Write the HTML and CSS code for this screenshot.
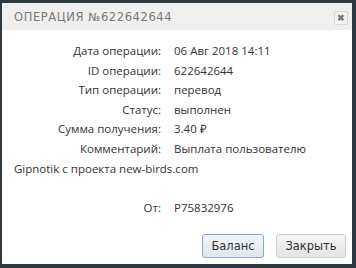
FILE: index.html
```html
<!DOCTYPE html>
<html lang="ru">

<head>
    <meta charset="UTF-8">
    <meta name="viewport" content="width=device-width, initial-scale=1.0">
    <title>Операция</title>
    <link rel="stylesheet" href="styles.css">
</head>

<body>
    <div class="dialog">
        <div class="dialog-header">
            <span class="dialog-title">Операция №622642644</span>
            <button class="close-btn" type="button">&#10006;</button>
        </div>
        <div class="dialog-body">
            <div class="info">
                <span class="label">Дата операции:</span>
                <span class="value">06 Авг 2018 14:11</span>
                <span class="label">ID операции:</span>
                <span class="value">622642644</span>
                <span class="label">Тип операции:</span>
                <span class="value">перевод</span>
                <span class="label">Статус:</span>
                <span class="value">выполнен</span>
                <span class="label">Сумма получения:</span>
                <span class="value">3.40 &#8381;</span>
                <span class="label">Комментарий:</span>
                <span class="value">Выплата пользователю</span>
                <span class="full">Gipnotik с проекта new-birds.com</span>
                <span class="full"></span>
                <span class="label">От:</span>
                <span class="value">P75832976</span>
            </div>
        </div>
        <div class="dialog-footer">
            <button class="btn btn-primary" type="button">Баланс</button>
            <button class="btn btn-close" type="button">Закрыть</button>
        </div>
    </div>
</body>

</html>
```

FILE: styles.css
```css
body {
    margin: 0;
    padding: 3px 4px 4px 2px;
    background-color: #2e3a40;
    font-family: "Open Sans", Arial, sans-serif;
}

.dialog {
    width: 350px;
    height: 261px;
    background: #fff;
    display: flex;
    flex-direction: column;
}

.dialog-header {
    height: 27px;
    flex-shrink: 0;
    background: #efefef;
    display: flex;
    align-items: center;
    justify-content: space-between;
    padding: 0 4px 0 12px;
}

.dialog-title {
    color: #7a7a7a;
    font-family: "DejaVu Sans", sans-serif;
    font-size: 11.5px;
    text-transform: uppercase;
    letter-spacing: 0.6px;
}

.close-btn {
    width: 14px;
    height: 14px;
    padding: 0;
    border: 1px solid #d6d6d6;
    border-radius: 2px;
    background: #f3f3f3;
    color: #777;
    font-size: 9px;
    font-weight: bold;
    line-height: 12px;
    margin-top: 3px;
}

.dialog-body {
    flex: 1;
    padding: 11px 0 0 0;
}

.info {
    display: grid;
    grid-template-columns: 159px 1fr;
    column-gap: 13px;
    font-size: 11.5px;
    line-height: 19.6px;
    color: #333;
}

.label {
    text-align: right;
}

.full {
    grid-column: 1 / 3;
    padding-left: 12px;
    min-height: 19.6px;
}

.dialog-footer {
    display: flex;
    justify-content: flex-end;
    gap: 12px;
    padding: 0 6px 6px 0;
}

.btn {
    height: 24px;
    padding: 0;
    font-family: "DejaVu Sans", Tahoma, sans-serif;
    font-size: 11.5px;
    color: #333;
    background: linear-gradient(#f6f6f6, #e4e4e4);
    border: 1px solid #cfcfcf;
    border-radius: 3px;
}

.btn-primary {
    width: 62px;
    border-color: #85a7d6;
    background: linear-gradient(#f2f5f9, #dfe6ee);
}

.btn-close {
    width: 70px;
}
```
